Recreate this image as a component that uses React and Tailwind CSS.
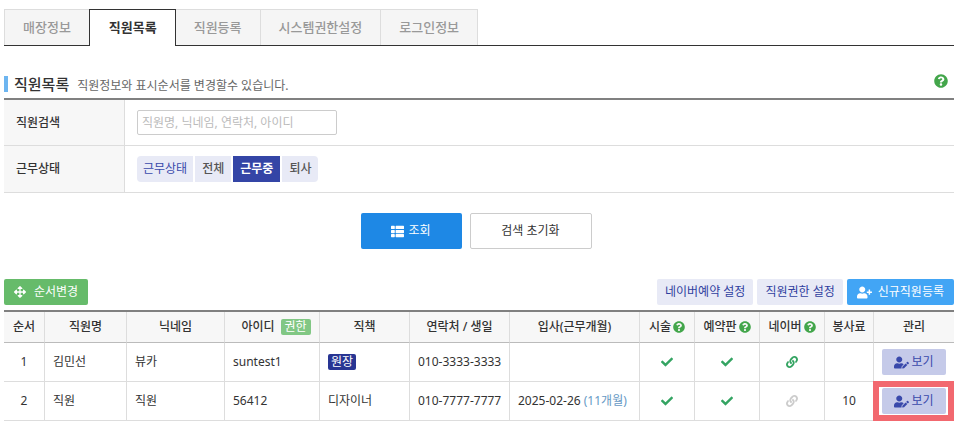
import { useState } from 'react'
import { FaArrowsAlt, FaCheck, FaLink, FaQuestionCircle, FaThList, FaUserEdit, FaUserPlus } from 'react-icons/fa'

const tabs = ['매장정보', '직원목록', '직원등록', '시스템권한설정', '로그인정보']

const statuses = ['전체', '근무중', '퇴사']

const columns = [
  { name: '순서', width: 'w-[40px]' },
  { name: '직원명', width: 'w-[82px]' },
  { name: '닉네임', width: 'w-[98px]' },
  { name: '아이디', width: 'w-[95px]', badge: '권한' },
  { name: '직책', width: 'w-[90px]' },
  { name: '연락처 / 생일', width: 'w-[100px]' },
  { name: '입사(근무개월)', width: 'w-auto' },
  { name: '시술', width: 'w-[55px]', help: true },
  { name: '예약판', width: 'w-[65px]', help: true },
  { name: '네이버', width: 'w-[65px]', help: true },
  { name: '봉사료', width: 'w-[49px]' },
  { name: '관리', width: 'w-[81px]' },
]

const employees = [
  {
    name: '김민선',
    nickname: '뷰카',
    id: 'suntest1',
    position: '원장',
    owner: true,
    phone: '010-3333-3333',
    naver: true,
  },
  {
    name: '직원',
    nickname: '직원',
    id: '56412',
    position: '디자이너',
    phone: '010-7777-7777',
    joined: '2025-02-26',
    months: '(11개월)',
    naver: false,
    fee: 10,
    highlighted: true,
  },
]

function Help({ className = '' }) {
  return (
    <button type="button" aria-label="도움말" className={`text-[#43a64b] ${className}`}>
      <FaQuestionCircle />
    </button>
  )
}

function Cell({ children, className = '' }) {
  return <td className={`h-[39px] border-b border-l border-[#ddd] px-2 first:border-l-0 ${className}`}>{children}</td>
}

export default function App() {
  const [tab, setTab] = useState('직원목록')
  const [status, setStatus] = useState('근무중')

  return (
    <main className="bg-white pt-[9px] pr-[9px] pb-3 pl-1 font-['Noto_Sans','Noto_Sans_CJK_KR',sans-serif] text-xs text-[#333]">
      <nav className="flex border-b border-[#333]">
        {tabs.map((name) => (
          <button
            key={name}
            type="button"
            onClick={() => setTab(name)}
            className={
              name === tab
                ? '-mb-px -ml-px h-[37px] border border-b-0 border-[#333] bg-white pr-[18px] pl-[19px] text-[13px] font-bold text-[#333]'
                : 'h-9 border-t border-r border-[#ddd] bg-[#f5f5f5] px-[18px] text-[13px] font-medium text-[#999] first:border-l'
            }
          >
            {name}
          </button>
        ))}
      </nav>

      <header className="mt-7 flex h-6 items-center pb-1">
        <span className="h-4 w-1 bg-[#6db5f0]" />
        <h1 className="ml-1.5 text-[15px] font-medium">직원목록</h1>
        <p className="ml-2 pt-1 text-xs text-[#666]">직원정보와 표시순서를 변경할수 있습니다.</p>
        <Help className="mr-1.5 ml-auto pb-1.5 text-[14px]" />
      </header>

      <form onSubmit={(e) => e.preventDefault()}>
        <div className="border-t-2 border-[#808080]">
          <div className="flex border-b border-[#ddd]">
            <label htmlFor="keyword" className="flex w-[121px] items-center border-r border-[#ddd] bg-[#f7f7f7] pl-3 font-medium">
              직원검색
            </label>
            <div className="px-3 py-2.5">
              <input
                id="keyword"
                type="text"
                placeholder="직원명, 닉네임, 연락처, 아이디"
                className="block h-[25px] w-[200px] rounded-xs border border-[#ccc] px-1 text-xs outline-none placeholder:text-[#bbb]"
              />
            </div>
          </div>
          <div className="flex border-b border-[#ddd]">
            <div id="status" className="flex w-[121px] items-center border-r border-[#ddd] bg-[#f7f7f7] pl-3 font-medium">
              근무상태
            </div>
            <div role="group" aria-labelledby="status" className="flex gap-0.5 px-3 py-2.5">
              <span className="flex h-[26px] items-center rounded-l bg-[#e8eaf6] px-1.5 text-[#3949ab]">근무상태</span>
              {statuses.map((name) => (
                <button
                  key={name}
                  type="button"
                  aria-pressed={name === status}
                  onClick={() => setStatus(name)}
                  className={
                    name === status
                      ? 'h-[26px] bg-[#3445a6] px-[7px] font-bold text-white'
                      : 'h-[26px] bg-[#e8eaf6] px-[7px] font-medium text-[#555] last:rounded-r'
                  }
                >
                  {name}
                </button>
              ))}
            </div>
          </div>
        </div>

        <div className="mt-5 flex justify-center gap-2 pr-1.5">
          <button type="submit" className="flex h-9 w-[101px] items-center justify-center gap-1 rounded-xs bg-[#1e88e5] text-white">
            <FaThList className="size-[13px]" />
            조회
          </button>
          <button type="reset" className="h-9 w-[122px] rounded-xs border border-[#ccc] bg-white">
            검색 초기화
          </button>
        </div>
      </form>

      <div className="mt-[30px] mb-[5px] flex gap-1">
        <button type="button" className="mr-auto flex h-[26px] items-center gap-2 rounded-xs bg-[#66bb6a] px-2.5 text-white">
          <FaArrowsAlt />
          순서변경
        </button>
        <button type="button" className="h-[26px] rounded-xs bg-[#e8eaf6] px-2 text-[#303f9f]">
          네이버예약 설정
        </button>
        <button type="button" className="h-[26px] rounded-xs bg-[#e8eaf6] px-2 text-[#303f9f]">
          직원권한 설정
        </button>
        <button type="button" className="flex h-[26px] items-center gap-1.5 rounded-xs bg-[#42a5f5] px-2.5 text-white">
          <FaUserPlus className="size-[15px]" />
          신규직원등록
        </button>
      </div>

      <table className="w-full table-fixed border-separate border-spacing-0 border-t-2 border-[#808080]">
        <thead>
          <tr>
            {columns.map((col) => (
              <th
                key={col.name}
                scope="col"
                className={`h-[31px] border-b border-l border-b-[#bbb] border-l-[#ddd] bg-[#f7f7f7] p-0 font-medium first:border-l-0 ${col.width}`}
              >
                <span className={`flex items-center justify-center gap-0.5 whitespace-nowrap ${col.badge ? 'pl-2' : ''}`}>
                  {col.name}
                  {col.badge && (
                    <span className="ml-1 rounded-xs bg-[#81c784] px-1 leading-4 font-normal text-white">{col.badge}</span>
                  )}
                  {col.help && <Help />}
                </span>
              </th>
            ))}
          </tr>
        </thead>
        <tbody>
          {employees.map((emp, i) => (
            <tr key={emp.id}>
              <Cell className="text-center">{i + 1}</Cell>
              <Cell>{emp.name}</Cell>
              <Cell>{emp.nickname}</Cell>
              <Cell>{emp.id}</Cell>
              <Cell>
                {emp.owner ? (
                  <span className="inline-block rounded-xs bg-[#283593] px-[3px] leading-4 text-white">{emp.position}</span>
                ) : (
                  emp.position
                )}
              </Cell>
              <Cell className="whitespace-nowrap">{emp.phone}</Cell>
              <Cell className="whitespace-nowrap">
                {emp.joined} {emp.months && <span className="text-[#6699c4]">{emp.months}</span>}
              </Cell>
              <Cell>
                <FaCheck className="mx-auto text-[#34a462]" />
              </Cell>
              <Cell>
                <FaCheck className="mx-auto text-[#34a462]" />
              </Cell>
              <Cell>
                <FaLink className={emp.naver ? 'mx-auto text-[#34a462]' : 'mx-auto text-[#ccc]'} />
              </Cell>
              <Cell className="text-center">{emp.fee}</Cell>
              <Cell className="relative">
                {emp.highlighted && (
                  <span className="pointer-events-none absolute -top-px right-0 -bottom-px -left-px border-6 border-[#f2686f]" />
                )}
                <button
                  type="button"
                  className="flex h-[26px] w-full items-center justify-center gap-0.5 rounded-xs bg-[#c5cae9] text-[#3949ab]"
                >
                  <FaUserEdit className="size-[15px]" />
                  보기
                </button>
              </Cell>
            </tr>
          ))}
        </tbody>
      </table>
    </main>
  )
}
